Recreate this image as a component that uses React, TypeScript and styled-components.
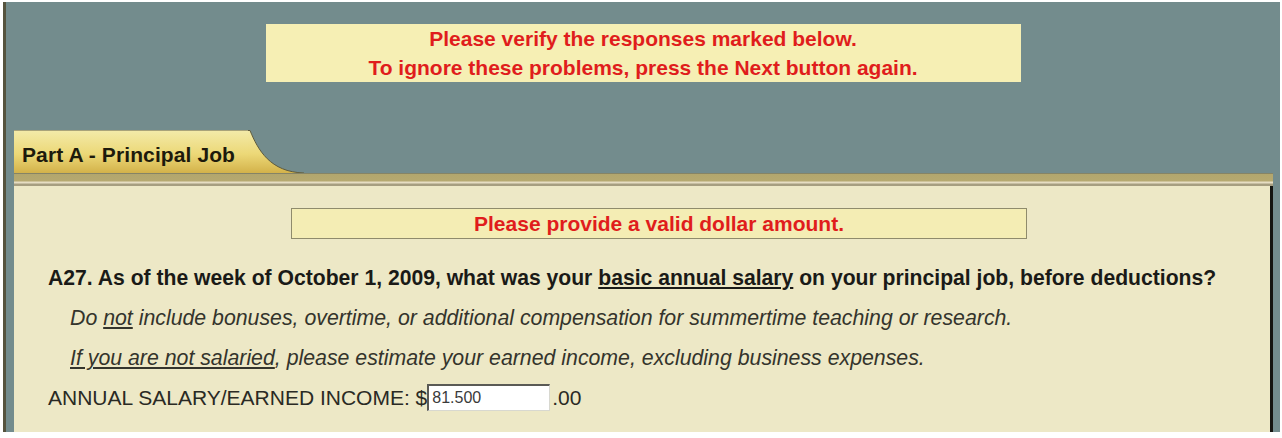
import React from "react";
import styled, { createGlobalStyle } from "styled-components";

const Global = createGlobalStyle`
  html, body { margin: 0; padding: 0; background: #ffffff; }
  body { font-family: "Liberation Sans", Arial, sans-serif; }
`;

const Frame = styled.div`
  box-sizing: border-box;
  width: 1277px;
  height: 430px;
  margin: 2px 0 0 3px;
  border-left: 3px solid #55533e;
  background: #738c8d;
  display: flex;
  flex-direction: column;
  padding-top: 22px;
`;

const Alert = styled.div`
  box-sizing: border-box;
  width: 755px;
  height: 58px;
  margin: 0 auto;
  background: #f6efb4;
  color: #e01d1c;
  font-weight: bold;
  font-size: 21px;
  line-height: 29px;
  text-align: center;
`;

const Section = styled.div`
  margin: 48px 7px 0 8px;
  flex: 1;
  display: flex;
  flex-direction: column;
`;

const TabRow = styled.div`
  display: flex;
  align-items: stretch;
  height: 43px;
`;

const TabFace = styled.div`
  display: flex;
  align-items: center;
  padding: 6px 0 0 8px;
  width: 226px;
  background: linear-gradient(#f3eaa8 0%, #ecd877 55%, #d3b24a 100%);
  border-top: 1px solid #a9a37a;
  font-weight: bold;
  font-size: 21px;
  letter-spacing: 0.1px;
  color: #1d1a0c;
  white-space: nowrap;
`;

const TabCurve = styled.svg`
  display: block;
  width: 56px;
  height: 43px;
`;

const Band = styled.div`
  height: 13px;
  background: linear-gradient(
    #868465 0px,
    #868465 1px,
    #b2a66d 1px,
    #b6a970 8px,
    #e6ddc3 9px,
    #e6ddc3 10px,
    #a69e80 11px,
    #a69e80 13px
  );
`;

const Panel = styled.div`
  flex: 1;
  background: #ede8c6;
  border-right: 3px solid #141410;
  display: flex;
  flex-direction: column;
  padding: 22px 0 0 34px;
`;

const Notice = styled.div`
  box-sizing: border-box;
  width: 736px;
  height: 31px;
  margin-left: 243px;
  border: 1px solid #8f8b6c;
  background: #f4edb4;
  color: #e01d1c;
  font-weight: bold;
  font-size: 21px;
  line-height: 29px;
  text-align: center;
`;

const Question = styled.p`
  margin: 27px 0 0 0;
  font-weight: bold;
  font-size: 21.15px;
  line-height: 24px;
  color: #1a1a17;
  white-space: nowrap;
`;

const Hint = styled.p`
  margin: 16px 0 0 22px;
  font-style: italic;
  font-size: 21.3px;
  line-height: 24px;
  color: #34342c;
  white-space: nowrap;
`;

const U = styled.span`
  text-decoration: underline;
`;

const AnswerRow = styled.div`
  margin-top: 14px;
  display: flex;
  align-items: center;
  font-size: 21px;
  color: #2a2a24;
  white-space: nowrap;
`;

const Amount = styled.input`
  box-sizing: border-box;
  width: 123px;
  height: 27px;
  margin: 0 2px 0 0;
  padding: 0 3px;
  border-style: solid;
  border-width: 2px 1px 1px 2px;
  border-color: #5a5a55 #d8d8d0 #d8d8d0 #5a5a55;
  background: #ffffff;
  font-family: "Liberation Sans", Arial, sans-serif;
  font-size: 16px;
  color: #3a3a3a;
  outline: none;
`;

export default function App() {
  return (
    <>
      <Global />
      <Frame>
        <Alert>
          Please verify the responses marked below.
          <br />
          To ignore these problems, press the Next button again.
        </Alert>
        <Section>
          <TabRow>
            <TabFace>Part A - Principal Job</TabFace>
            <TabCurve viewBox="0 0 56 43" preserveAspectRatio="none">
              <defs>
                <linearGradient id="tabFill" x1="0" y1="0" x2="0" y2="1">
                  <stop offset="0" stopColor="#f3eaa8" />
                  <stop offset="0.55" stopColor="#ecd877" />
                  <stop offset="1" stopColor="#d3b24a" />
                </linearGradient>
              </defs>
              <path d="M0 0.5 L2 0.5 C10 20 22 42 56 43 L0 43 Z" fill="url(#tabFill)" />
              <path d="M0 0.5 L2 0.5 C10 20 22 42 56 43" fill="none" stroke="#5f5b3d" strokeWidth="1" />
            </TabCurve>
          </TabRow>
          <Band />
          <Panel>
            <Notice>Please provide a valid dollar amount.</Notice>
            <Question>
              A27. As of the week of October 1, 2009, what was your <U>basic annual salary</U> on your
              principal job, before deductions?
            </Question>
            <Hint>
              Do <U>not</U> include bonuses, overtime, or additional compensation for summertime teaching or
              research.
            </Hint>
            <Hint>
              <U>If you are not salaried</U>, please estimate your earned income, excluding business expenses.
            </Hint>
            <AnswerRow>
              ANNUAL SALARY/EARNED INCOME: $
              <Amount defaultValue="81.500" />
              .00
            </AnswerRow>
          </Panel>
        </Section>
      </Frame>
    </>
  );
}
